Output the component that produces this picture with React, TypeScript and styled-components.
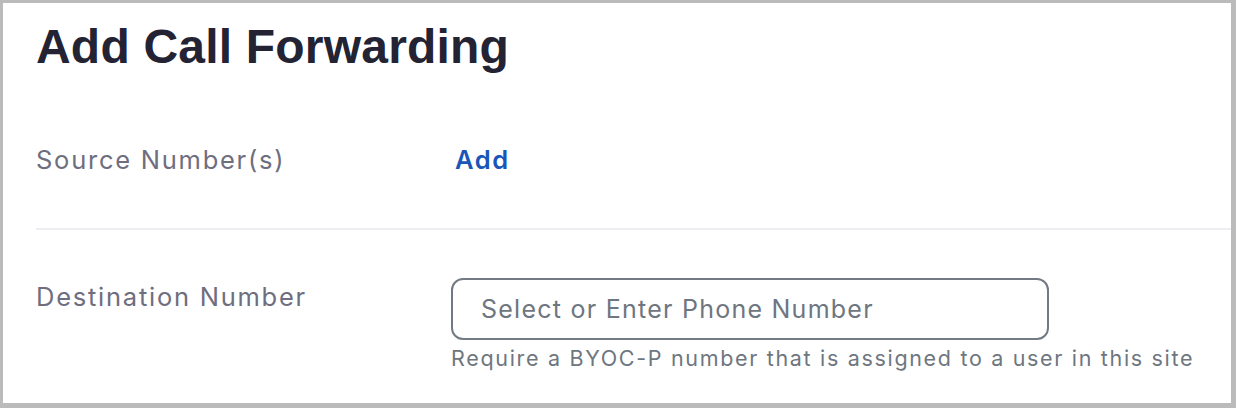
import React from 'react'
import styled, { createGlobalStyle } from 'styled-components'

const GlobalStyle = createGlobalStyle`
  html, body {
    margin: 0;
    padding: 0;
    background: #bbbbbb;
  }
  body {
    font-family: Inter, 'Liberation Sans', Arial, sans-serif;
    -webkit-font-smoothing: antialiased;
  }
`

const Frame = styled.div`
  width: 1236px;
  height: 408px;
  box-sizing: border-box;
  padding: 3px 5px 5px 3px;
  background: #bbbbbb;
`

const Panel = styled.div`
  height: 100%;
  background: #ffffff;
  padding: 0 0 0 33px;
  box-sizing: border-box;
  overflow: hidden;
`

const Title = styled.h1`
  margin: 0;
  padding: 18px 0 0 0;
  font-family: 'Liberation Sans', Arial, sans-serif;
  font-size: 48px;
  font-weight: 700;
  line-height: 52px;
  color: #232333;
  letter-spacing: 0.2px;
`

const Row = styled.div<{ $divider?: boolean; $top: number; $bottom?: number }>`
  display: grid;
  grid-template-columns: 415px 1fr;
  align-items: start;
  padding-top: ${(p) => p.$top}px;
  padding-bottom: ${(p) => p.$bottom ?? 0}px;
  border-bottom: ${(p) => (p.$divider ? '2px solid #ededf2' : 'none')};
`

const Label = styled.div<{ $offset?: number }>`
  font-size: 25.5px;
  line-height: 28px;
  letter-spacing: 1.75px;
  color: #6e6e7e;
  padding-top: ${(p) => p.$offset ?? 0}px;
`

const AddLink = styled.a`
  font-size: 25.5px;
  line-height: 28px;
  font-weight: 600;
  letter-spacing: 1.6px;
  color: #1a55b8;
  text-decoration: none;
  padding-left: 4px;
  cursor: pointer;
`

const Field = styled.div`
  display: flex;
  flex-direction: column;
  gap: 6px;
`

const Input = styled.input`
  width: 598px;
  height: 62px;
  box-sizing: border-box;
  border: 2px solid #737a84;
  border-radius: 12px;
  padding: 0 28px;
  font-family: Inter, 'Liberation Sans', Arial, sans-serif;
  font-size: 25px;
  letter-spacing: 1.25px;
  color: #232333;
  outline: none;
  &::placeholder {
    color: #6e7680;
  }
`

const Hint = styled.div`
  font-size: 21.5px;
  line-height: 24px;
  letter-spacing: 1.68px;
  color: #6e7680;
`

export default function App() {
  return (
    <>
      <GlobalStyle />
      <Frame>
        <Panel>
          <Title>Add Call Forwarding</Title>
          <Row $divider $top={73} $bottom={54}>
            <Label>Source Number(s)</Label>
            <AddLink>Add</AddLink>
          </Row>
          <Row $top={48}>
            <Label $offset={5}>Destination Number</Label>
            <Field>
              <Input placeholder="Select or Enter Phone Number" />
              <Hint>Require a BYOC-P number that is assigned to a user in this site</Hint>
            </Field>
          </Row>
        </Panel>
      </Frame>
    </>
  )
}
